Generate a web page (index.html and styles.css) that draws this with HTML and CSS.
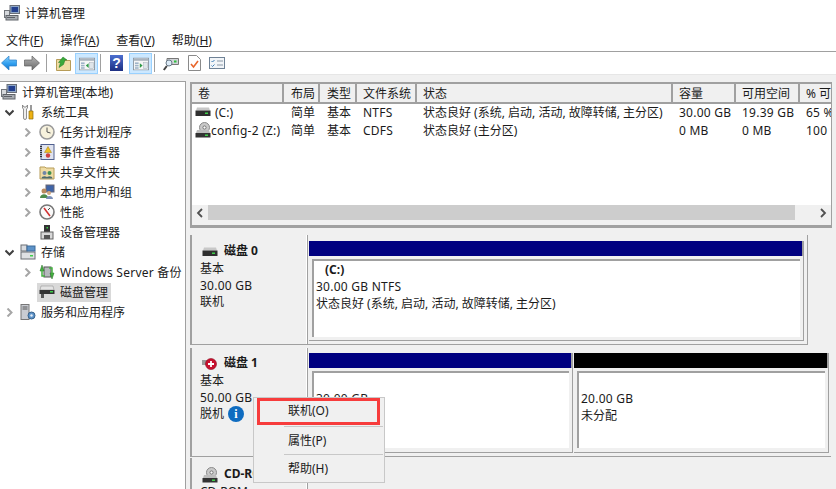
FILE: index.html
```html
<!DOCTYPE html>
<html lang="zh-CN">
<head>
<meta charset="utf-8">
<title>计算机管理</title>
<link rel="stylesheet" href="styles.css">
</head>
<body>
<svg class="defs" width="0" height="0" aria-hidden="true">
  <defs>
    <linearGradient id="blue-arrow" x1="0" y1="0" x2="0" y2="1"><stop offset="0" stop-color="#8ad0fb"/><stop offset=".55" stop-color="#2f9ff0"/><stop offset="1" stop-color="#1770c4"/></linearGradient>
    <linearGradient id="gray-arrow" x1="0" y1="0" x2="0" y2="1"><stop offset="0" stop-color="#b5b5b5"/><stop offset="1" stop-color="#6a6a6a"/></linearGradient>
    <symbol id="computer" viewBox="0 0 16 16">
      <rect x="6" y="0.500" width="9.500" height="8" fill="#8fa8c8" stroke="#6b6f78"/>
      <rect x="7.500" y="2" width="6.500" height="5" fill="#24408f"/>
      <rect x="0.500" y="5.500" width="5" height="7" fill="#d5d8dc" stroke="#70747a"/>
      <rect x="2" y="10.500" width="12" height="4.500" fill="#a9adb3" stroke="#60646a"/>
      <rect x="3" y="12" width="8" height="1" fill="#5c6066"/>
    </symbol>
    <symbol id="drive" viewBox="0 0 16 10">
      <path d="M2 0.500h12l1 3H1z" fill="#c8c8c8"/>
      <rect x="0.500" y="3.500" width="15" height="5.500" fill="#2f2f2f"/>
      <rect x="10" y="5.500" width="3" height="1.500" fill="#3fd04a"/>
    </symbol>
    <symbol id="cdrive" viewBox="0 0 16 16">
      <circle cx="9.500" cy="5.500" r="5" fill="#c9c9c9" stroke="#8a8a8a"/>
      <circle cx="9.500" cy="5.500" r="1.600" fill="#fafafa" stroke="#777"/>
      <path d="M2 8h12l1 3H1z" fill="#bdbdbd"/>
      <rect x="0.500" y="11" width="15" height="4.500" fill="#333"/>
      <rect x="10" y="12.500" width="3" height="1.500" fill="#3fd04a"/>
    </symbol>
    <symbol id="chev-r" viewBox="0 0 9 9">
      <path d="M2.500 0.500l4 4-4 4" fill="none" stroke="#a6a6a6" stroke-width="2"/>
    </symbol>
    <symbol id="chev-d" viewBox="0 0 9 9">
      <path d="M0.500 2.500l4 4 4-4" fill="none" stroke="#404040" stroke-width="2"/>
    </symbol>
    <symbol id="win-pane" viewBox="0 0 20 16">
      <rect x="0.500" y="0.500" width="19" height="15" fill="#f6f6f6" stroke="#7f8a94"/>
      <rect x="1" y="1" width="18" height="3" fill="#aab4be"/>
      <rect x="2.500" y="6" width="4.500" height="2" fill="#9fb4c8"/>
      <rect x="2.500" y="9" width="4.500" height="2" fill="#9fb4c8"/>
      <rect x="2.500" y="12" width="4.500" height="2" fill="#9fb4c8"/>
      <rect x="13" y="6" width="5" height="8" fill="#dfe5ea" stroke="#9aa6b0" stroke-width=".5"/>
    </symbol>
  </defs>
</svg>

<div class="app">
  <header class="titlebar">
    <svg class="ico16"><use href="#computer"/></svg>
    <span>计算机管理</span>
  </header>

  <nav class="menubar">
    <span class="menu-item">文件(<u>F</u>)</span>
    <span class="menu-item">操作(<u>A</u>)</span>
    <span class="menu-item">查看(<u>V</u>)</span>
    <span class="menu-item">帮助(<u>H</u>)</span>
  </nav>

  <div class="toolbar">
    <svg class="tool-arrow" viewBox="0 0 16 16"><path d="M0.500 8L8 1v4h7.500v6H8v4z" fill="url(#blue-arrow)" stroke="#2a7fc8" stroke-width=".7"/></svg>
    <svg class="tool-arrow last" viewBox="0 0 16 16"><path d="M15.500 8L8 1v4H0.500v6H8v4z" fill="url(#gray-arrow)" stroke="#5f5f5f" stroke-width=".7"/></svg>
    <i class="tool-sep"></i>
    <svg class="tool-folder" viewBox="0 0 15 16"><path d="M0.500 4.500h5l1 1h8v10H.5z" fill="#efdca4" stroke="#b79c58"/><path d="M3 12.500l1.500-5H2.500L7 2l4 3H9L7.500 9.500z" fill="#3aa83a" stroke="#1f7a22" stroke-width=".5"/></svg>
    <span class="tool-btn on"><svg class="tool-win" viewBox="0 0 20 16"><use href="#win-pane"/><path d="M12 7v6l-3.500-3z" fill="#2f9a46"/></svg></span>
    <i class="tool-sep"></i>
    <span class="tool-help">?</span>
    <span class="tool-btn on"><svg class="tool-win" viewBox="0 0 20 16"><use href="#win-pane"/><path d="M8.500 7v6l3.500-3z" fill="#2f9a46"/></svg></span>
    <i class="tool-sep tight"></i>
    <svg class="tool-device" viewBox="0 0 16 16"><path d="M4 3.500h11.500v6H4z" fill="#d0d3d6" stroke="#777"/><rect x="11" y="5.500" width="2.500" height="2" fill="#2fc040"/><circle cx="6" cy="8" r="3" fill="#dcebf7" stroke="#6a7a88"/><path d="M0.800 15l3-4" stroke="#444" stroke-width="2"/></svg>
    <svg class="tool-page" viewBox="0 0 13 16"><path d="M0.500 0.500h8l4 4v11H.5z" fill="#fff" stroke="#8a8a8a"/><path d="M3 9l2.500 3 4.500-6" fill="none" stroke="#e8662c" stroke-width="1.600"/></svg>
    <svg class="tool-list" viewBox="0 0 16 16"><rect x="0.500" y="2.500" width="15" height="11" fill="#f2f5f8" stroke="#6f8296"/><path d="M2.500 6l1 1 2-2M2.500 10.500l1 1 2-2" fill="none" stroke="#3d7fb8"/><path d="M8 6h6M8 10h6" stroke="#8a98a6"/></svg>
  </div>

  <main class="panes">
    <aside class="tree">
      <div class="tree-row"><svg class="ico16"><use href="#computer"/></svg><span class="tree-label">计算机管理(本地)</span></div>
      <div class="tree-row lv1"><svg class="tw"><use href="#chev-d"/></svg>
        <svg class="ico16" viewBox="0 0 16 16"><path d="M2.500 1v3l1 1v9a1.500 1.500 0 0 0 3 0V5l1-1V1L6 3H4z" fill="#eee" stroke="#777" stroke-width=".8"/><rect x="10" y="1" width="2" height="6" fill="#9a9a9a"/><path d="M9 7h4v8H9z" fill="#eeb214" stroke="#8a6a10" stroke-width=".7"/></svg>
        <span class="tree-label">系统工具</span></div>
      <div class="tree-row lv2"><svg class="tw"><use href="#chev-r"/></svg>
        <svg class="ico16" viewBox="0 0 16 16"><circle cx="8" cy="8" r="7" fill="#f7f2dd" stroke="#9a9a9a" stroke-width="1.600"/><path d="M8 3.500V8l3.500 1" fill="none" stroke="#555"/></svg>
        <span class="tree-label">任务计划程序</span></div>
      <div class="tree-row lv2"><svg class="tw"><use href="#chev-r"/></svg>
        <svg class="ico16" viewBox="0 0 16 16"><rect x="2" y="0.500" width="13" height="15" fill="#dfe3ef" stroke="#50608f"/><path d="M2 2v12" stroke="#333" stroke-width="2" stroke-dasharray="1 1"/><path d="M9 2.500l3.500 6h-7z" fill="#f0c020" stroke="#a07a10" stroke-width=".5"/><circle cx="9" cy="11.500" r="2.200" fill="#d04040"/></svg>
        <span class="tree-label">事件查看器</span></div>
      <div class="tree-row lv2"><svg class="tw"><use href="#chev-r"/></svg>
        <svg class="ico16" viewBox="0 0 16 16"><path d="M1 3h5l1 1h8v11H1z" fill="#efdca4" stroke="#b79c58"/><circle cx="5.500" cy="9" r="2" fill="#6f87a8"/><circle cx="10.500" cy="9" r="2" fill="#3f8f4f"/><path d="M2.500 14.500c0-3 6-3 6 0zM7.500 14.500c0-3 6-3 6 0z" fill="#4a6a70"/></svg>
        <span class="tree-label">共享文件夹</span></div>
      <div class="tree-row lv2"><svg class="tw"><use href="#chev-r"/></svg>
        <svg class="ico16" viewBox="0 0 16 16"><rect x="7" y="1" width="8" height="7" fill="#3e64a8" stroke="#667"/><circle cx="5" cy="7" r="2.500" fill="#b9895e"/><path d="M1 14c0-5 8-5 8 0z" fill="#4c8a4c"/><circle cx="10" cy="9" r="2" fill="#d2a77d"/><path d="M7 15c0-4 7-4 7 0z" fill="#7a8fb8"/></svg>
        <span class="tree-label">本地用户和组</span></div>
      <div class="tree-row lv2"><svg class="tw"><use href="#chev-r"/></svg>
        <svg class="ico16" viewBox="0 0 16 16"><circle cx="8" cy="8" r="7" fill="#fafafa" stroke="#777" stroke-width="1.600"/><path d="M5 4l6 8" stroke="#d03030" stroke-width="1.600"/><path d="M11 4L9 6" stroke="#444"/></svg>
        <span class="tree-label">性能</span></div>
      <div class="tree-row lv2"><i class="tw"></i>
        <svg class="ico16" viewBox="0 0 16 16"><rect x="5" y="1" width="6" height="7" fill="#333"/><rect x="7.500" y="3" width="1.500" height="1.500" fill="#3fd04a"/><rect x="2" y="8" width="12" height="7" fill="#d8d8d8" stroke="#666"/><rect x="5" y="11" width="6" height="4" fill="#555"/></svg>
        <span class="tree-label">设备管理器</span></div>
      <div class="tree-row lv1"><svg class="tw"><use href="#chev-d"/></svg>
        <svg class="ico16" viewBox="0 0 16 16"><rect x="1" y="8" width="14" height="7" fill="#dfe1e4" stroke="#6a6e74"/><rect x="10" y="11" width="3" height="1.500" fill="#3fd04a"/><rect x="1" y="1" width="6" height="6" fill="#d8dbdf" stroke="#6a6e74"/><rect x="7" y="2" width="8" height="5" fill="#5c92c8" stroke="#3c6a98"/></svg>
        <span class="tree-label">存储</span></div>
      <div class="tree-row lv2"><svg class="tw"><use href="#chev-r"/></svg>
        <svg class="ico16" viewBox="0 0 16 16"><rect x="5" y="3" width="7" height="10" fill="#b5b8bc" stroke="#555"/><path d="M3 1l2 6H1zM13 15l-2-6h4z" fill="#45b041" stroke="#256f22" stroke-width=".5"/><path d="M3 6v6h3M13 10V4h-3" fill="none" stroke="#45b041" stroke-width="1.500"/></svg>
        <span class="tree-label lat">Windows Server 备份</span></div>
      <div class="tree-row lv2"><i class="tw"></i>
        <span class="selected"><svg class="ico16" viewBox="0 0 16 16"><path d="M2 2h12l1 4H1z" fill="#e4e4e4" stroke="#888" stroke-width=".5"/><rect x="0.500" y="6" width="15" height="4" fill="#333"/><rect x="11" y="7" width="3" height="1.500" fill="#3fd04a"/><path d="M2 10h3v4H2z" fill="#555"/></svg><span class="tree-label">磁盘管理</span></span></div>
      <div class="tree-row lv1"><svg class="tw"><use href="#chev-r"/></svg>
        <svg class="ico16" viewBox="0 0 16 16"><rect x="1" y="0.500" width="8" height="15" fill="#c9ccd2" stroke="#777"/><path d="M2.500 3h5M2.500 5h5" stroke="#555"/><circle cx="11.500" cy="11.500" r="3.500" fill="#5c92c8" stroke="#37618a"/><circle cx="11.500" cy="11.500" r="1.200" fill="#e6eef5"/></svg>
        <span class="tree-label">服务和应用程序</span></div>
    </aside>

    <section class="right">
      <div class="volumes">
        <div class="vol-table">
          <div class="vol-head"><span>卷</span><span>布局</span><span>类型</span><span>文件系统</span><span>状态</span><span>容量</span><span>可用空间</span><span>% 可用</span></div>
          <div class="vol-row">
            <span class="vol-name"><svg class="drive-ico"><use href="#drive"/></svg><b class="vol-c">(C:)</b></span><span>简单</span><span>基本</span><span class="lat">NTFS</span><span>状态良好 (系统, 启动, 活动, 故障转储, 主分区)</span><span class="lat">30.00 GB</span><span class="lat">19.39 GB</span><span class="lat">65 %</span>
          </div>
          <div class="vol-row">
            <span class="vol-name"><svg class="ico16"><use href="#cdrive"/></svg><b class="lat">config-2 (Z:)</b></span><span>简单</span><span>基本</span><span class="lat">CDFS</span><span>状态良好 (主分区)</span><span class="lat">0 MB</span><span class="lat">0 MB</span><span class="lat">100 %</span>
          </div>
        </div>
        <div class="hscroll">
          <svg class="sb-btn" viewBox="0 0 8 10"><path d="M6 1L2 5l4 4" fill="none" stroke="#505050" stroke-width="1.800"/></svg>
          <div class="sb-track"><div class="sb-thumb"></div></div>
          <svg class="sb-btn" viewBox="0 0 8 10"><path d="M2 1l4 4-4 4" fill="none" stroke="#505050" stroke-width="1.800"/></svg>
        </div>
      </div>

      <div class="disks">
        <div class="disk disk0">
          <div class="disk-label">
            <div class="disk-name"><svg class="drive-ico"><use href="#drive"/></svg><strong>磁盘 0</strong></div>
            <div>基本</div><div class="lat">30.00 GB</div><div>联机</div>
          </div>
          <div class="disk-map">
            <div class="part full">
              <div class="part-bar navy"></div>
              <div class="part-box"><div class="part-inner">
                <div class="part-title">(C:)</div>
                <div class="lat">30.00 GB NTFS</div>
                <div>状态良好 (系统, 启动, 活动, 故障转储, 主分区)</div>
              </div></div>
            </div>
          </div>
        </div>

        <div class="disk disk1">
          <div class="disk-label">
            <div class="disk-name"><svg class="offline-ico" viewBox="0 0 16 12"><rect x="0" y="2" width="6" height="5" fill="#9a9a9a"/><circle cx="9" cy="6" r="5.500" fill="#c8102e" stroke="#8d0b20" stroke-width=".6"/><path d="M6 6h6M9 3v6" stroke="#fff" stroke-width="1.800"/></svg><strong>磁盘 1</strong></div>
            <div>基本</div><div class="lat">50.00 GB</div>
            <div class="offline">脱机<span class="info">i</span></div>
          </div>
          <div class="disk-map">
            <div class="part first">
              <div class="part-bar navy"></div>
              <div class="part-box"><div class="part-inner spaced"><div class="lat">30.00 GB</div></div></div>
            </div>
            <div class="part second">
              <div class="part-bar black"></div>
              <div class="part-box"><div class="part-inner spaced"><div class="lat">20.00 GB</div><div>未分配</div></div></div>
            </div>
          </div>
        </div>

        <div class="disk disk2">
          <div class="disk-label">
            <div class="disk-name"><svg class="ico16"><use href="#cdrive"/></svg><strong>CD-ROM 0</strong></div>
            <div>CD-ROM</div>
          </div>
        </div>
      </div>
    </section>
  </main>
</div>

<div class="ctx">
  <div class="ctx-item first">联机(O)</div>
  <i class="ctx-sep"></i>
  <div class="ctx-item">属性(P)</div>
  <i class="ctx-sep"></i>
  <div class="ctx-item">帮助(H)</div>
  <div class="ctx-red"></div>
</div>
</body>
</html>
```
FILE: styles.css
```css
* { box-sizing: border-box; }
html, body { margin: 0; padding: 0; height: 100%; overflow: hidden; }
body {
  position: relative;
  background: #f0f0f0;
  font-family: "Noto Sans", "Noto Sans CJK SC", sans-serif;
  font-size: 12px;
  line-height: 17px;
  color: #1a1a1a;
}
.lat { letter-spacing: .25px; }
.defs { position: absolute; }
.app { display: flex; flex-direction: column; height: 489px; }
.ico16 { width: 16px; height: 16px; flex: none; }

.titlebar {
  height: 26px; background: #fff;
  display: flex; align-items: center; gap: 5px; padding-left: 4px;
}
.menubar {
  height: 26px; background: #fff; border-bottom: 1px solid #a0a0a0;
  display: flex; align-items: center; padding-left: 6px; gap: 17px; padding-top: 3px;
}
.menu-item u { text-decoration: underline; }

.toolbar {
  height: 23px; background: #fff; border-bottom: 1px solid #e6e6e6;
  display: flex; align-items: center; padding-left: 1px;
}
.tool-arrow { width: 16px; height: 16px; margin-right: 7px; flex: none; }
.tool-arrow.last { margin-right: 6px; }
.tool-sep { width: 1px; height: 18px; background: #a0a0a0; margin-right: 9px; flex: none; }
.tool-sep.tight { margin-right: 8px; }
.tool-folder { width: 15px; height: 16px; margin-right: 4px; flex: none; }
.tool-device { width: 16px; height: 16px; margin-right: 9px; flex: none; }
.tool-page { width: 13px; height: 16px; margin-right: 8px; flex: none; }
.tool-list { width: 16px; height: 16px; flex: none; }
.tool-btn { width: 23px; height: 21px; display: flex; align-items: center; justify-content: center; margin-right: 2px; flex: none; }
.tool-btn.on { background: #cce8ff; border: 1px solid #99d1ff; }
.tool-win { width: 16px; height: 14px; margin-top: 2px; }
.tool-help {
  width: 13px; height: 16px; margin-right: 6px; flex: none;
  background: linear-gradient(#4c6fd0, #1d2f82); color: #fff;
  font: bold 14px/16px "Liberation Sans", sans-serif; text-align: center;
}

.panes { flex: 1; min-height: 0; display: flex; padding-top: 6px; }
.tree {
  width: 186px; background: #fff; border-right: 1px solid #a0a0a0; border-top: 1px solid #a0a0a0;
  overflow: hidden; flex: none;
}
.tree-row { height: 20px; display: flex; align-items: center; gap: 4px; padding-left: 1px; white-space: nowrap; }
.tree-label { padding-left: 1px; }
.tw { width: 9px; height: 9px; flex: none; display: block; }
.lv1 { padding-left: 5px; }
.lv1 .tw { margin-right: 2px; }
.lv2 { padding-left: 23px; }
.lv2 .tw { margin-right: 3px; }
.selected { display: flex; align-items: center; gap: 4px; background: #d9d9d9; height: 19px; padding-right: 3px; margin-left: -2px; }
.selected .ico16 { margin-left: 2px; }

.right { flex: 1; min-width: 0; display: flex; flex-direction: column; margin-left: 4px; padding-top: 1px; overflow: hidden; }
.volumes {
  height: 146px; flex: none; background: #fff;
  border: solid #a0a0a0; border-width: 2px 1px 3px 2px; margin-right: 4px;
  display: flex; flex-direction: column; justify-content: space-between;
}
.vol-head, .vol-row {
  display: grid;
  grid-template-columns: 92px 36px 37px 60px 256px 63px 64px 40px;
  white-space: nowrap; overflow: hidden;
}
.vol-head { height: 20px; border-bottom: 2px solid #a0a0a0; background: #f0f0f0; }
.vol-head span { padding-left: 6px; border-right: 2px solid #a0a0a0; line-height: 19px; overflow: hidden; }
.vol-row { height: 18px; align-items: center; }
.vol-head + .vol-row { margin-top: -1px; }
.vol-row span { padding-left: 6px; }
.vol-head span:nth-child(2), .vol-head span:nth-child(3),
.vol-row span:nth-child(2), .vol-row span:nth-child(3) { padding-left: 7px; }
.vol-row span.vol-name { padding-left: 3px; display: flex; align-items: center; }
.vol-name b { font-weight: 400; }
.vol-c { padding-left: 4px; }
.drive-ico { width: 16px; height: 10px; flex: none; }
.hscroll { height: 20px; padding-bottom: 5px; background: #f0f0f0; display: flex; align-items: center; flex: none; }
.sb-btn { width: 16px; height: 10px; flex: none; }
.sb-track { flex: 1; height: 15px; }
.sb-thumb { width: 587px; height: 100%; background: #cdcdcd; }

.disks { flex: 1; min-height: 0; padding-top: 7px; overflow: hidden; }
.disk { display: flex; border-bottom: 1px solid #a0a0a0; }
.disk0 { height: 110px; width: 618px; border-right: 1px solid #a0a0a0; margin-bottom: 3px; }
.disk1 { height: 109px; margin-right: 5px; }
.disk2 { height: 40px; border-bottom: 0; margin-top: 1px; }
.disk-label {
  width: 118px; flex: none; padding: 7px 0 0 8px; line-height: 16.5px;
  border-left: 2px solid #a0a0a0; border-right: 1px solid #a0a0a0;
  box-shadow: inset -1px 0 0 #fff; background: #f0f0f0;
}
.disk0 .disk-label, .disk2 .disk-label { padding-top: 8px; }
.disk-name { display: flex; align-items: center; gap: 6px; height: 17px; margin-bottom: 1px; padding-left: 2px; }
.disk-name strong { font-weight: 700; }
.offline-ico { width: 16px; height: 12px; flex: none; }
.offline { display: flex; align-items: center; gap: 4px; }
.info {
  width: 16px; height: 16px; border-radius: 50%; background: #0f6cc0; color: #fff;
  font: bold 12px/16px "Liberation Serif", serif; text-align: center;
}
.disk-map { flex: 1; min-width: 0; display: flex; gap: 1px; padding: 5px 2px 3px 1px; }
.disk0 .disk-map { padding: 6px 3px 3px 1px; }
.part { display: flex; flex-direction: column; min-width: 0; }
.part.full { flex: 1; }
.part.first { width: 264px; flex: none; }
.part.second { flex: 1; }
.part-bar { height: 15px; flex: none; border-right: 2px solid #a0a0a0; }
.part-bar.navy { background: #000080; }
.part-bar.black { background: #000; }
.part-box { flex: 1; min-height: 0; padding: 3px 3px 4px; border: solid #a0a0a0; border-width: 0 1px 1px 0; }
.disk0 .part-box { padding-bottom: 3px; }
.part-inner {
  height: 100%; background: #fff; border-left: 2px solid #a0a0a0; border-top: 2px solid #a0a0a0; padding-left: 2px; white-space: nowrap; overflow: hidden;
}
.part-title { font-weight: 700; padding-left: 9px; }
.part-inner.spaced { padding-top: 17px; }

.ctx {
  position: absolute; left: 253px; top: 397px; width: 132px; height: 86px;
  background: #f0f0f0; border: 1px solid #c8c8c8;
}
.ctx-item { height: 25px; line-height: 25px; padding-left: 34px; }
.ctx-item.first { height: 26px; line-height: 26px; margin-bottom: 2px; }
.ctx-sep { display: block; height: 1px; margin: 1px 1px 1px 30px; background: #c8c8c8; }
.ctx-red { position: absolute; left: 3px; top: 0; width: 123px; height: 27px; border: 3px solid #f73c3c; }
```
